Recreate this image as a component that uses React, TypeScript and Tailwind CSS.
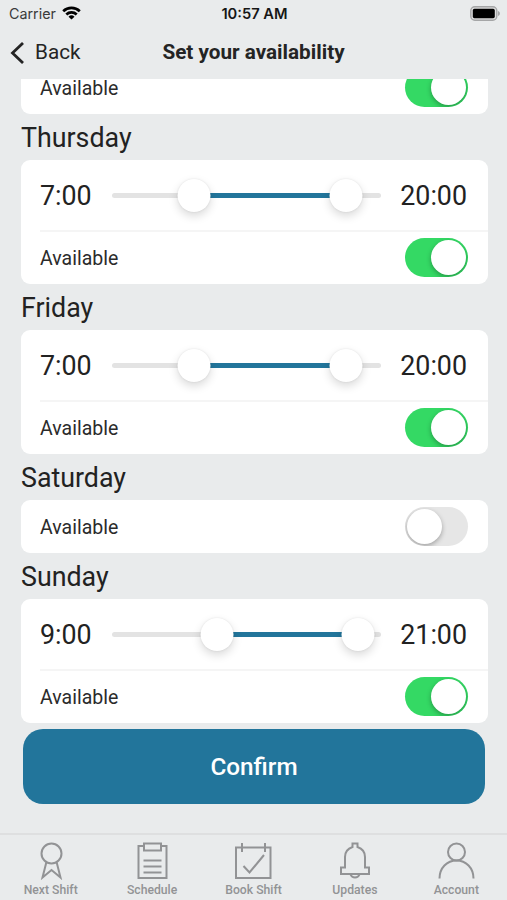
import React, { useState } from 'react';

const MAX_HOUR = 23;

interface Day {
    name: string;
    from: number;
    to: number;
    available: boolean;
}

const initialDays: Day[] = [
    { name: 'Thursday', from: 7, to: 20, available: true },
    { name: 'Friday', from: 7, to: 20, available: true },
    { name: 'Saturday', from: 7, to: 20, available: false },
    { name: 'Sunday', from: 9, to: 21, available: true },
];

const StatusBar: React.FC = () => (
    <div className="grid h-[27px] grid-cols-3 items-center pl-[9px] pr-[7px] font-['Inter'] text-[14.700px] text-[#161616]">
        <div className="flex items-center gap-[6px]">
            <span className="pt-px text-[14.300px] text-[#3a3a3a]">Carrier</span>
            <svg className="-mt-px h-[14px] w-[19px]" viewBox="0 0 19 14" fill="none" stroke="#000" strokeWidth="2.7">
                <path d="M1.2 5.2a12 12 0 0 1 16.6 0" />
                <path d="M4.3 8.5a7.5 7.5 0 0 1 10.4 0" />
                <path d="M9.5 13.6 6.5 10.7a4.3 4.3 0 0 1 6 0z" fill="#000" stroke="none" />
            </svg>
        </div>
        <span className="pt-[2px] text-center font-semibold whitespace-nowrap">10:57 AM</span>
        <svg className="-mt-[1px] h-[15px] w-[30px] justify-self-end" viewBox="0 0 30 15">
            <rect x="0.800" y="0.8" width="26" height="13.4" rx="4" fill="#dedede" stroke="#a5a6a7" strokeWidth="1.4" />
            <rect x="2.800" y="2.800" width="22" height="9.400" rx="1.6" fill="#000" />
            <path d="M28 5v5c1.3-.5 1.9-1.4 1.9-2.5S29.300 5.500 28 5z" fill="#a5a6a7" />
        </svg>
    </div>
);

interface ToggleProps {
    on: boolean;
    onChange?: () => void;
}

const Toggle: React.FC<ToggleProps> = ({ on, onChange }) => (
    <button
        role="switch"
        aria-checked={on}
        aria-label="Available"
        onClick={onChange}
        className={`flex h-[39px] w-[63px] items-center overflow-hidden rounded-full px-[2px] ${on ? 'justify-end bg-[#34d964]' : 'justify-start bg-[#e6e6e6]'}`}
    >
        <span className="h-[35px] w-[35px] rounded-full bg-white shadow-[0_2px_5px_rgba(0,0,0,0.3)]" />
    </button>
);

const AvailableRow: React.FC<ToggleProps> = ({ on, onChange }) => (
    <div className="flex h-[53px] w-full shrink-0 items-center justify-between pl-[19px] pr-5">
        <span className="pt-[2px] text-[19.500px] text-[#2b2b2b]">Available</span>
        <Toggle on={on} onChange={onChange} />
    </div>
);

const RangeSlider: React.FC<{ from: number; to: number }> = ({ from, to }) => {
    const start = (from / MAX_HOUR) * 100;
    const end = (to / MAX_HOUR) * 100;

    return (
        <div className="relative h-[5px] w-[269px] rounded-full bg-[#e3e3e3]">
            <div className="absolute h-full bg-[#22759b]" style={{ left: `${start}%`, width: `${end - start}%` }} />
            {[start, end].map(pos => (
                <span
                    key={pos}
                    className="absolute -top-[14px] h-[33px] w-[33px] -translate-x-1/2 rounded-full bg-white shadow-[0_4px_10px_rgba(0,0,0,0.15),0_0_2px_rgba(0,0,0,0.1)]"
                    style={{ left: `${pos}%` }}
                />
            ))}
        </div>
    );
};

const DayCard: React.FC<{ day: Day; onToggle: () => void }> = ({ day, onToggle }) => (
    <section>
        <h2 className="h-[46px] text-[26.800px] leading-[48px] text-[#222]">{day.name}</h2>
        <div className="rounded-[9px] bg-white">
            {day.available && (
                <div className="ml-[19px] flex h-[72px] items-center justify-between border-b-2 border-[#f5f5f5] pr-[21px] text-[26.800px] text-[#222]">
                    <span className="w-[53px] pt-[2px]">{day.from}:00</span>
                    <RangeSlider from={day.from} to={day.to} />
                    <span className="pt-[2px]">{day.to}:00</span>
                </div>
            )}
            <div className={day.available ? '-mt-px' : ''}>
                <AvailableRow on={day.available} onChange={onToggle} />
            </div>
        </div>
    </section>
);

const tabs = [
    {
        label: 'Next Shift',
        icon: (
            <>
                <circle cx="20.500" cy="11.500" r="10" />
                <path d="M15.300 20.500 11.500 35.500l9-7.500L29.500 35.500 25.700 20.500" />
            </>
        ),
    },
    {
        label: 'Schedule',
        icon: (
            <>
                <path d="M12 4H6.500v32h28V4H29" />
                <path d="M12 1.500h17v7H12z" />
                <path d="M11.500 18.500h18M11.500 24.500h18M11.500 30.500h18" />
            </>
        ),
    },
    {
        label: 'Book Shift',
        icon: (
            <>
                <path d="M3 5.500h34.500V36H3zM9 1v9M32 1v9" />
                <path d="M10.500 24l6 6.500 14.500-17.500" />
            </>
        ),
    },
    {
        label: 'Updates',
        icon: (
            <>
                <path d="M17.500 5V1.500h5V5c4.500 1.500 7.500 5 7.500 10v10.500h4v6.500H6v-6.500h4V15c0-5 3-8.500 7.500-10z" />
                <path d="M15.500 32.500c.8 2 2.300 3 4.500 3s3.700-1 4.500-3" />
            </>
        ),
    },
    {
        label: 'Account',
        icon: (
            <>
                <circle cx="20.500" cy="10" r="8.500" />
                <path d="M3.500 36.500C3.500 26 11 18.500 20.500 18.500S37.500 26 37.500 36.500" />
            </>
        ),
    },
];

const TabBar: React.FC = () => (
    <nav className="grid h-[67px] grid-cols-5 border-t-2 border-[#dedfe0] text-[#929395]">
        {tabs.map(tab => (
            <a key={tab.label} href="#" className="flex flex-col items-center pt-[7px]">
                <svg className="h-[38px] w-10" viewBox="0 0 40 38" fill="none" stroke="currentColor" strokeWidth="2">
                    {tab.icon}
                </svg>
                <span className="mt-[2px] text-[12.200px] leading-4 font-medium">{tab.label}</span>
            </a>
        ))}
    </nav>
);

const App: React.FC = () => {
    const [days, setDays] = useState<Day[]>(initialDays);

    const toggleDay = (name: string) => {
        setDays(prev => prev.map(day => (day.name === name ? { ...day, available: !day.available } : day)));
    };

    return (
        <div className="flex h-[900px] w-[507px] flex-col overflow-hidden bg-[#e9ebec] font-['Roboto',sans-serif]">
            <StatusBar />
            <header className="grid h-[52px] shrink-0 grid-cols-[1fr_auto_1fr] items-center px-[10px] text-[#242424]">
                <button className="flex items-center gap-[11px] text-[20.700px]">
                    <svg className="h-[22px] w-[14px]" viewBox="0 0 14 22" fill="none" stroke="currentColor" strokeWidth="2.800">
                        <path d="M13 1 2.500 11 13 21" />
                    </svg>
                    Back
                </button>
                <h1 className="text-[20.700px] font-bold">Set your availability</h1>
            </header>

            <main className="min-h-0 flex-1 overflow-hidden pl-[21px] pr-[19px]">
                {/* Wednesday, scrolled mostly under the header */}
                <div className="flex h-[35px] items-end overflow-hidden rounded-b-[9px] bg-white">
                    <AvailableRow on />
                </div>
                {days.map(day => (
                    <DayCard key={day.name} day={day} onToggle={() => toggleDay(day.name)} />
                ))}
                <button className="mx-[2px] mt-[6px] block h-[75px] w-[462px] rounded-[20px] bg-[#22759b] pt-[2px] text-[24.300px] font-medium text-white">
                    Confirm
                </button>
            </main>

            <TabBar />
        </div>
    );
};

export default App;
